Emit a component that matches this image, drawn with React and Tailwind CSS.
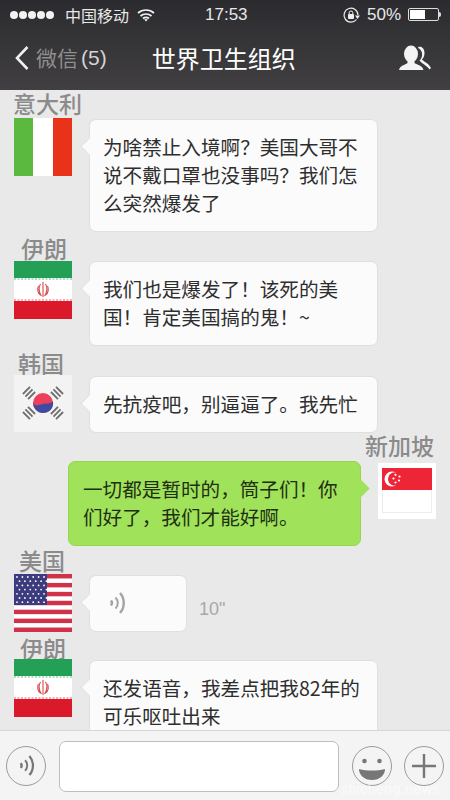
import { Fragment } from "react";

const cjk = { fontFamily: '"Noto Sans CJK SC", "Liberation Sans", sans-serif' };

function ItalyFlag() {
  return (
    <div className="flex w-[58px] h-[58px]">
      <div className="flex-1 bg-[#5cb940]" />
      <div className="flex-1 bg-white" />
      <div className="flex-1 bg-[#e8321a]" />
    </div>
  );
}

function IranFlag() {
  return (
    <svg width="58" height="58" viewBox="0 0 58 58" className="block">
      <rect width="58" height="58" fill="#fff" />
      <rect width="58" height="17" fill="#239f56" />
      <rect y="40" width="58" height="18" fill="#da1a2a" />
      <path d="M0 18h58" stroke="#239f56" strokeWidth="1.200" strokeDasharray="2 1.500" opacity="0.7" />
      <path d="M0 39h58" stroke="#da1a2a" strokeWidth="1.200" strokeDasharray="2 1.500" opacity="0.7" />
      <path d="M29 21v15M26.500 23c-2 3-2 8 1 12M31.500 23c2 3 2 8-1 12M24.500 25c-1.500 3-1 7 2 9M33.500 25c1.500 3 1 7-2 9" fill="none" stroke="#d8484a" strokeWidth="1.100" />
    </svg>
  );
}

function Trigram({ x, y, angle }) {
  return (
    <g transform={`translate(${x} ${y}) rotate(${angle})`} fill="#6e6e6e">
      <rect x="-5" y="-4.500" width="10" height="1.800" />
      <rect x="-5" y="-0.900" width="10" height="1.800" />
      <rect x="-5" y="2.700" width="10" height="1.800" />
    </g>
  );
}

function KoreaFlag() {
  return (
    <div className="w-[58px] h-[57px] bg-[#f3f3f3]">
      <svg width="58" height="57" viewBox="0 0 58 57" className="block">
        <circle cx="29" cy="28" r="10" fill="#ee3f5a" />
        <path d="M19 27c1 5 5 3 10 2s8 0 10-3c1 8-4 12-10 12s-10-5-10-11z" fill="#3f4aa0" />
        <Trigram x={15} y={18} angle={-45} />
        <Trigram x={43} y={18} angle={45} />
        <Trigram x={15} y={38} angle={45} />
        <Trigram x={43} y={38} angle={-45} />
      </svg>
    </div>
  );
}

function SingaporeFlag() {
  return (
    <div className="w-[58px] h-[56px] bg-white pt-[5px] px-[4px]">
      <div className="h-[22px] bg-[#ee2536] flex items-center pl-[2px]">
        <svg width="20" height="20" viewBox="0 0 20 20">
          <circle cx="8" cy="10" r="7.500" fill="#fff" />
          <circle cx="10.800" cy="10" r="6.800" fill="#ee2536" />
          <g fill="#fff">
            <circle cx="11.500" cy="5.800" r="1.100" />
            <circle cx="15.500" cy="7.500" r="1.100" />
            <circle cx="9.500" cy="9.500" r="1.100" />
            <circle cx="15" cy="11.500" r="1.100" />
            <circle cx="11.500" cy="13.500" r="1.100" />
          </g>
        </svg>
      </div>
      <div className="h-[23px] border-x border-b border-[#eeeeee]" />
    </div>
  );
}

function UsaFlag() {
  const stripes = [...Array(13).keys()];
  const rows = [...Array(7).keys()];
  const cols = [...Array(6).keys()];
  return (
    <svg width="58" height="58" viewBox="0 0 58 58" className="block">
      <rect width="58" height="58" fill="#fff" />
      {stripes.filter((i) => i % 2 === 0).map((i) => (
        <rect key={i} y={(i * 58) / 13} width="58" height={58 / 13} fill="#d0324a" />
      ))}
      <rect width="33" height="31" fill="#3c3b7e" />
      {rows.map((r) =>
        cols.map((c) => (
          <circle key={`${r}-${c}`} cx={3 + c * 5.4 + (r % 2) * 2.5} cy={3 + r * 4.2} r="0.9" fill="#fff" />
        ))
      )}
    </svg>
  );
}

function StatusBar() {
  return (
    <div className="h-[30px] flex items-center pb-[1px] text-[#e8e8e8]">
      <div className="flex gap-[1px] ml-[10px] w-[55px]">
        {[0, 1, 2, 3, 4].map((i) => (
          <span key={i} className="w-[8px] h-[8px] rounded-full bg-[#f2f2f2]" />
        ))}
      </div>
      <span className="text-[16px] leading-none" style={cjk}>中国移动</span>
      <svg width="18" height="14" viewBox="0 0 18 14" className="ml-[8px]">
        <path d="M1 5c4.500-4 11.500-4 16 0M3.500 8c3-2.700 8-2.700 11 0M6 10.500c1.700-1.400 4.300-1.400 6 0" fill="none" stroke="#f2f2f2" strokeWidth="1.700" />
        <path d="M9 13.500l-1.800-2c1-.7 2.600-.7 3.600 0z" fill="#f2f2f2" />
      </svg>
      <span className="text-[17px] ml-[50px] font-['Liberation_Sans'] leading-none">17:53</span>
      <div className="ml-auto mr-[9px] flex items-center">
        <svg width="18" height="18" viewBox="0 0 18 18">
          <path d="M14.500 13.500A7 7 0 1 1 16 9" fill="none" stroke="#eeeeee" strokeWidth="1.200" />
          <path d="M13 9.500h5l-2.500 3.500z" fill="#eeeeee" />
          <rect x="6" y="8" width="6" height="5" rx="1" fill="#eeeeee" />
          <path d="M7.200 8V6.800a1.800 1.800 0 0 1 3.600 0V8" fill="none" stroke="#eeeeee" />
        </svg>
        <span className="text-[17px] ml-[7px] font-['Liberation_Sans'] leading-none">50%</span>
        <div className="ml-[7px] w-[31px] h-[13px] border border-[#dddddd] rounded-[2px] p-[1px]">
          <div className="w-[15px] h-full bg-white" />
        </div>
        <div className="w-[2px] h-[5px] bg-[#dddddd] rounded-r-sm" />
      </div>
    </div>
  );
}

function NavBar() {
  return (
    <div className="h-[60px] flex items-center pb-[5px]">
      <svg width="16" height="26" viewBox="0 0 16 26" className="ml-[14px]">
        <path d="M13.500 2L3 13l10.500 11" fill="none" stroke="#f0f0f0" strokeWidth="2.600" />
      </svg>
      <span className="text-[21px] text-[#8f8f8f] ml-[6px] leading-none" style={cjk}>微信</span>
      <span className="text-[21px] text-[#d4d4d4] ml-[3px] leading-none font-['Liberation_Sans']">(5)</span>
      <span className="text-[24px] text-white ml-[45px] leading-none" style={cjk}>世界卫生组织</span>
      <svg width="34" height="26" viewBox="0 0 34 26" className="ml-auto mr-[18px]">
        <ellipse cx="13" cy="9" rx="7" ry="8.500" fill="#f4f4f4" />
        <path d="M9.500 15h7v3c3 2 8 2.500 9 7H1c1-4.500 6-5 8.500-7z" fill="#f4f4f4" />
        <path d="M20 2c4-1 6.500 2 6.500 6 0 3-1 5-2.500 6.500 1.500 2 7 4 9 8.500l-1.500 1.500c-2-3.500-8-6-10-9 2-2 3-4.500 2.500-7.500-.5-2.500-2-4-4-5 .2-.5.300-.8.500-1z" fill="#f4f4f4" />
      </svg>
    </div>
  );
}

function Bubble({ width, height, lines, className = "mt-[1px]", children }) {
  return (
    <div className={`relative ml-[17px] ${className} ${width} ${height} bg-[#fbfbfb] border border-[#dfdfdf] rounded-[7px]`}>
      <span className="absolute left-[-7px] top-[20px] w-[13px] h-[13px] rotate-45 bg-[#fbfbfb] border-l border-b border-[#dfdfdf]" />
      {lines ? (
        <p className="relative pl-[13px] pt-[13px] text-[19.6px] leading-[28px] text-[#2e2e2e] whitespace-nowrap" style={cjk}>
          {lines.map((l, i) => (
            <Fragment key={i}>
              {l}
              <br />
            </Fragment>
          ))}
        </p>
      ) : (
        children
      )}
    </div>
  );
}

function Name({ className, children }) {
  return (
    <div className={`text-[23px] leading-[24px] font-medium text-[#8b8b8b] whitespace-nowrap ${className}`} style={cjk}>
      {children}
    </div>
  );
}

function VoiceIcon({ width, height, color }) {
  return (
    <svg width={width} height={height} viewBox="0 0 16 24">
      <path d="M2 9.500c1.200 1.500 1.200 3.500 0 5" fill="none" stroke={color} strokeWidth="2.400" />
      <path d="M6.500 6.500c3 3.200 3 7.800 0 11" fill="none" stroke={color} strokeWidth="2" />
      <path d="M11 2c5 5.500 5 14.500 0 20" fill="none" stroke={color} strokeWidth="2.400" />
    </svg>
  );
}

function CircleBtn({ children, className }) {
  return (
    <div className={`w-[40px] h-[40px] rounded-full border border-[#9a9a9a] flex items-center justify-center shrink-0 ${className}`}>
      {children}
    </div>
  );
}

export default function App() {
  return (
    <div className="relative w-[450px] h-[800px] flex flex-col overflow-hidden bg-[#e9e9e9]">
      <header className="relative z-10 h-[90px] shrink-0 bg-gradient-to-b from-[#2b2b2f] to-[#413f41]">
        <StatusBar />
        <NavBar />
      </header>

      <main className="flex-1 min-h-0 pt-[1px]">
        <Name className="ml-[13px]">意大利</Name>
        <div className="flex ml-[14px] mt-[3px]">
          <ItalyFlag />
          <Bubble
            width="w-[289px]"
            height="h-[113px]"
            lines={["为啥禁止入境啊\uFF1F美国大哥不", "说不戴口罩也没事吗\uFF1F我们怎", "么突然爆发了"]}
          />
        </div>

        <Name className="ml-[21px] mt-[4px]">伊朗</Name>
        <div className="flex ml-[14px] mt-[1px]">
          <IranFlag />
          <Bubble
            className="mt-0"
            width="w-[289px]"
            height="h-[85px]"
            lines={["我们也是爆发了\uFF01该死的美", "国\uFF01肯定美国搞的鬼\uFF01~"]}
          />
        </div>

        <Name className="ml-[18px] mt-[5px]">韩国</Name>
        <div className="flex ml-[14px]">
          <KoreaFlag />
          <Bubble width="w-[289px]" height="h-[57px]" lines={["先抗疫吧\uFF0C别逼逼了。我先忙"]} />
        </div>

        <Name className="ml-[365px]">新加坡</Name>
        <div className="flex justify-end mr-[14px] mt-[4px]">
          <div className="relative w-[293px] h-[85px] bg-[#a0e25a] border border-[#94d652] rounded-[7px]">
            <span className="absolute right-[-7px] top-[20px] w-[13px] h-[13px] rotate-45 bg-[#a0e25a]" />
            <p className="relative pl-[14px] pt-[13px] text-[19.6px] leading-[28px] text-[#1f2f12] whitespace-nowrap" style={cjk}>
              {"一切都是暂时的\uFF0C筒子们\uFF01你"}
              <br />
              {"们好了\uFF0C我们才能好啊。"}
            </p>
          </div>
          <div className="ml-[17px] mt-[2px]">
            <SingaporeFlag />
          </div>
        </div>

        <Name className="ml-[19px] mt-[2px]">美国</Name>
        <div className="flex ml-[14px] mt-[2px]">
          <UsaFlag />
          <Bubble width="w-[98px]" height="h-[57px]">
            <div className="relative h-full flex items-center pl-[18px] pb-[2px]">
              <VoiceIcon width={18} height={24} color="#a3a3a3" />
            </div>
          </Bubble>
          <span className="self-end ml-[12px] mb-[14px] text-[18px] text-[#a8a8a8] font-['Liberation_Sans'] leading-none">10"</span>
        </div>

        <Name className="ml-[20px] mt-[4px]">伊朗</Name>
        <div className="flex ml-[14px] mt-[-1px]">
          <IranFlag />
          <Bubble
            width="w-[289px]"
            height="h-[85px]"
            lines={["还发语音\uFF0C我差点把我82年的", "可乐呕吐出来"]}
          />
        </div>
      </main>

      <footer className="relative z-10 h-[70px] shrink-0 bg-[#f4f4f5] border-t border-[#d6d6d6] flex items-center px-[6px]">
        <CircleBtn>
          <VoiceIcon width={17} height={23} color="#777777" />
        </CircleBtn>
        <div className="ml-[13px] w-[280px] h-[51px] bg-white border border-[#bdbdbd] rounded-[7px] mt-[1px]" />
        <CircleBtn className="ml-[13px]">
          <svg width="30" height="30" viewBox="0 0 30 30">
            <circle cx="7.500" cy="10" r="2.300" fill="#777" />
            <circle cx="22.500" cy="10" r="2.300" fill="#777" />
            <path d="M2 18c8 2 18 2 26 0 0 6-5 11-13 11S2 24 2 18z" fill="#777" />
          </svg>
        </CircleBtn>
        <CircleBtn className="ml-[12px]">
          <svg width="24" height="24" viewBox="0 0 24 24">
            <path d="M12 0v24M0 12h24" stroke="#777" strokeWidth="2.400" />
          </svg>
        </CircleBtn>
        <span className="absolute right-[10px] bottom-[4px] text-[14px] tracking-[0.5px] text-white/60 font-['Liberation_Sans'] leading-none">shicheng.news</span>
      </footer>
    </div>
  );
}
